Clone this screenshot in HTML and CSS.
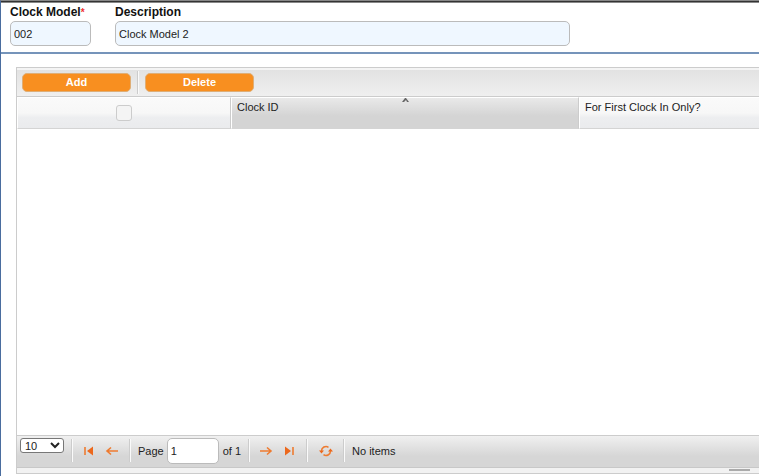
FILE: index.html
```html
<!DOCTYPE html>
<html lang="en">
<head>
<meta charset="utf-8">
<title>Clock Model</title>
<link rel="stylesheet" href="styles.css">
</head>
<body>
<main class="window">
  <form class="model">
    <div class="field field-code">
      <label for="code">Clock Model<span class="required">*</span></label>
      <input id="code" type="text" value="002">
    </div>
    <div class="field field-description">
      <label for="description">Description</label>
      <input id="description" type="text" value="Clock Model 2">
    </div>
  </form>
  <section class="grid">
    <div class="toolbar">
      <button type="button">Add</button>
      <span class="divider"></span>
      <button type="button">Delete</button>
    </div>
    <div class="grid-body">
      <table>
        <thead>
          <tr>
            <th class="col-select"><input type="checkbox" aria-label="Select all"></th>
            <th class="col-id">Clock ID
              <svg class="sort" viewBox="0 0 7 5" aria-hidden="true"><path d="M3 0H4L7 4H5L4 2L2 4H0Z" fill="#666"/></svg>
            </th>
            <th>For First Clock In Only?</th>
          </tr>
        </thead>
      </table>
    </div>
    <div class="pager">
      <select aria-label="Page size"><option>10</option></select>
      <span class="divider"></span>
      <div class="icons">
        <button type="button" aria-label="First page"><svg viewBox="0 0 14 14"><path d="M3 3V11" class="bar"/><path d="M11 2.500V11.500L5 7Z" class="solid"/></svg></button>
        <button type="button" aria-label="Previous page"><svg viewBox="0 0 14 14"><path d="M13 7H2M6 3.500L2 7L6 10.500" class="line"/></svg></button>
      </div>
      <span class="divider"></span>
      <label for="page">Page</label>
      <input id="page" type="text" value="1">
      <span class="total">of 1</span>
      <span class="divider"></span>
      <div class="icons">
        <button type="button" aria-label="Next page"><svg viewBox="0 0 14 14"><path d="M1 7H12M8 3.500L12 7L8 10.500" class="line"/></svg></button>
        <button type="button" aria-label="Last page"><svg viewBox="0 0 14 14"><path d="M11 3V11" class="bar"/><path d="M3 2.500V11.500L9 7Z" class="solid"/></svg></button>
      </div>
      <span class="divider"></span>
      <div class="icons refresh">
        <button type="button" aria-label="Refresh"><svg viewBox="0 0 14 14"><path d="M2.500 7A4.500 4.500 0 0 1 9.500 3.300M11.500 7A4.500 4.500 0 0 1 4.500 10.700" class="line"/><path d="M0 6.500H5L2.500 9.500ZM9 7.500H14L11.500 4.500Z" class="solid"/></svg></button>
      </div>
      <span class="divider"></span>
      <span class="status">No items</span>
    </div>
    <div class="resize"><span class="grip"></span></div>
  </section>
</main>
</body>
</html>
```
FILE: styles.css
```css
* { box-sizing: border-box; }
body {
  margin: 0;
  background: #fff;
  color: #222;
  font: 11px/16px "Liberation Sans", Arial, sans-serif;
}
input, select, button { font: inherit; color: inherit; margin: 0; }
.window {
  display: flex;
  flex-direction: column;
  height: 100vh;
  margin-right: 3px;
  border-top: 1px solid #888;
  border-left: 1px solid #4a6d9f;
  overflow: hidden;
}
.window::before {
  content: "";
  height: 1px;
  background: #333;
  border-bottom: 1px solid #888;
}
.model {
  display: flex;
  gap: 24px;
  padding: 1px 9px 6px;
  border-bottom: 2px solid #7594ba;
}
.field { display: flex; flex-direction: column; }
.field label {
  height: 17px;
  color: #111;
  font-size: 12px;
  font-weight: bold;
  white-space: nowrap;
}
.required { color: #f03030; font-size: 10px; line-height: 1; }
.field input {
  width: 100%;
  height: 25px;
  padding: 0 3px;
  border: 1px solid #bbb;
  border-radius: 5px;
  background: #eff7ff;
}
.field-code { flex: 0 0 81px; }
.field-description { flex: 0 1 455px; }
.grid {
  display: flex;
  flex: 1;
  flex-direction: column;
  margin: 13px 0 2px 15px;
  border: 1px solid #ccc;
  border-right: 0;
}
.toolbar {
  display: flex;
  align-items: center;
  gap: 6px;
  height: 28px;
  padding: 0 5px 2px;
  background: linear-gradient(#e2e2e2, #efefef);
  border-top: 2px solid #f4f4f4;
}
.toolbar button {
  width: 109px;
  height: 19px;
  padding: 0;
  border: 1px solid #dfae76;
  border-radius: 5px;
  background: #f88f20;
  color: #fff;
  font-weight: bold;
  line-height: 16px;
}
.divider {
  width: 2px;
  height: 23px;
  background: #fafafa;
  border-left: 1px solid #ccc;
}
.grid-body { flex: 1; }
table {
  width: 100%;
  border-collapse: separate;
  border-spacing: 0;
  table-layout: fixed;
  border-top: 1px solid #ccc;
}
th {
  position: relative;
  height: 32px;
  padding: 1px 5px;
  border-top: 1px solid #fff;
  border-bottom: 1px solid #d4d4d4;
  border-left: 1px solid #fff;
  background: linear-gradient(#fafafa 0%, #f7f7f7 50%, #edeef0 65%, #eaebed 100%);
  font-weight: normal;
  text-align: left;
  vertical-align: top;
}
.col-select { width: 214px; padding: 0 0 1px; border-right: 1px solid #ccc; vertical-align: middle; }
.col-id { width: 348px; border-right: 1px solid #ccc; background: linear-gradient(#e9e9e9, #d4d4d4 60%); }
.col-select input {
  appearance: none;
  display: block;
  width: 16px;
  height: 16px;
  margin: 0 auto;
  border: 1px solid #ccc;
  border-radius: 3px;
  background: #f4f4f4;
}
.sort { position: absolute; top: 0; left: 49%; width: 7px; height: 5px; }
.pager {
  display: flex;
  align-items: center;
  height: 33px;
  padding: 0 0 2px 3px;
  border-top: 1px solid #ccc;
  border-bottom: 1px solid #c8c8c8;
  background: linear-gradient(#f0f0f0, #d6d6d6 65%);
  white-space: nowrap;
}
.pager select {
  align-self: flex-start;
  width: 44px;
  height: 15px;
  margin: 2px 7px 0 0;
  border: 1px solid #777;
  border-radius: 3px;
  background: #fff;
  line-height: 13px;
}
.icons { display: flex; gap: 9px; margin: 0 10px 0 9px; }
.icons button { display: flex; width: 14px; height: 14px; padding: 0; border: 0; background: none; }
.icons svg { width: 14px; height: 14px; }
.pager .refresh { margin: 0 10px 0 11px; }
.line, .bar { fill: none; stroke: #ee7b30; }
.line { stroke-width: 1.6; }
.bar { stroke-width: 1.6; }
.solid { fill: #ec681c; }
.pager label { margin: 0 3px 0 7px; }
.pager input {
  width: 52px;
  height: 26px;
  padding: 0 3px;
  border: 1px solid #bbb;
  border-radius: 5px;
  background: #fff;
}
.total { margin: 0 7px 0 4px; }
.status { margin-left: 7px; }
.resize { display: flex; justify-content: flex-end; height: 5px; padding: 1px 9px 0 0; background: #f2f2f2; }
.grip { width: 21px; height: 2px; background: #aaa; }
```
